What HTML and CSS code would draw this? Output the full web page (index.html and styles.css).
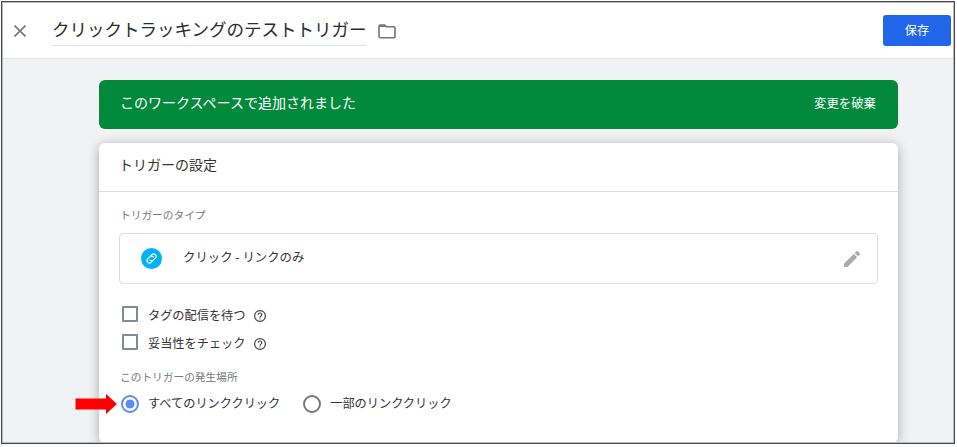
FILE: index.html
```
<!DOCTYPE html>
<html lang="ja">
<head>
  <meta charset="UTF-8">
  <meta name="viewport" content="width=device-width, initial-scale=1.0">
  <title>クリックトラッキングのテストトリガー</title>
  <link rel="stylesheet" href="styles.css">
</head>
<body>
  <div class="window">
    <!-- Header -->
    <header class="header">
      <svg class="icon-close" viewBox="0 0 12 12"><path d="M.5.5l11 11M11.500.5L.5 11.500"/></svg>
      <h1 class="title">クリックトラッキングのテストトリガー</h1>
      <svg class="icon-folder" viewBox="0 0 18 15"><path d="M1 2.2Q1 1 2.2 1H6.6L8.3 2.8H15.8Q17 2.8 17 4V12.6Q17 13.8 15.8 13.8H2.2Q1 13.8 1 12.6Z"/><path d="M1 2.2H7.5"/></svg>
      <button class="btn-save">保存</button>
    </header>

    <main class="content">
      <!-- Status banner -->
      <div class="banner">
        <span class="banner-text">このワークスペースで追加されました</span>
        <a class="banner-action">変更を破棄</a>
      </div>

      <!-- Trigger settings -->
      <section class="card">
        <h2 class="card-title">トリガーの設定</h2>
        <div class="card-body">
          <div class="label">トリガーのタイプ</div>
          <div class="type-box">
            <span class="type-icon">
              <svg viewBox="0 0 24 24"><g transform="rotate(-45 12 12)"><path d="M10 16.500H6.500a4.500 4.500 0 0 1 0-9H12a4.500 4.500 0 0 1 4.300 5.500"/><path d="M14 7.500H17.500a4.500 4.500 0 0 1 0 9H12a4.500 4.500 0 0 1-4.300-5.500"/></g></svg>
            </span>
            <span class="type-name">クリック - リンクのみ</span>
            <svg class="icon-edit" viewBox="3 3 18 18"><path d="M3 17.25V21h3.75L17.81 9.94l-3.75-3.75L3 17.25zM20.71 7.04a1 1 0 0 0 0-1.41l-2.34-2.34a1 1 0 0 0-1.41 0l-1.83 1.83 3.75 3.75 1.83-1.83z"/></svg>
          </div>

          <div class="check-row">
            <span class="checkbox"></span>
            <span class="option-text">タグの配信を待つ</span>
            <svg class="icon-help" viewBox="2 2 20 20"><path d="M11 18h2v-2h-2v2zm1-16a10 10 0 1 0 0 20 10 10 0 0 0 0-20zm0 18a8 8 0 1 1 0-16 8 8 0 0 1 0 16zm0-14a4 4 0 0 0-4 4h2a2 2 0 1 1 4 0c0 2-3 1.750-3 5h2c0-2.250 3-2.500 3-5a4 4 0 0 0-4-4z"/></svg>
          </div>
          <div class="check-row">
            <span class="checkbox"></span>
            <span class="option-text">妥当性をチェック</span>
            <svg class="icon-help" viewBox="2 2 20 20"><path d="M11 18h2v-2h-2v2zm1-16a10 10 0 1 0 0 20 10 10 0 0 0 0-20zm0 18a8 8 0 1 1 0-16 8 8 0 0 1 0 16zm0-14a4 4 0 0 0-4 4h2a2 2 0 1 1 4 0c0 2-3 1.750-3 5h2c0-2.250 3-2.500 3-5a4 4 0 0 0-4-4z"/></svg>
          </div>

          <div class="label label-fire">このトリガーの発生場所</div>
          <div class="radio-row">
            <svg class="arrow" viewBox="0 0 42 20"><path d="M.5 4.500H31V0L42 10 31 20V15.500H.5Z"/></svg>
            <span class="radio checked"></span>
            <span class="option-text radio-text">すべてのリンククリック</span>
            <span class="radio"></span>
            <span class="option-text">一部のリンククリック</span>
          </div>
        </div>
      </section>
    </main>
  </div>
</body>
</html>
```
FILE: styles.css
```
* {
  box-sizing: border-box;
}
body {
  margin: 0;
  padding: 1px 0 0 1px;
  height: 447px;
  overflow: hidden;
  background-color: #fcfcfc;
  color: #333;
  font-family: "Noto Sans CJK JP", sans-serif;
}
svg {
  display: block;
  flex: none;
}
.window {
  width: 954px;
  height: 443px;
  border: 1px solid #48494b;
  outline: 1px solid #b9babb;
  outline-offset: -2px;
  background-color: #f1f2f4;
  overflow: hidden;
}

/* Header */
.header {
  display: flex;
  align-items: center;
  height: 57px;
  padding: 0 3px 0 12px;
  background-color: #fff;
  border-bottom: 1px solid #e0e1e2;
}
.icon-close {
  width: 12px;
  height: 12px;
  margin: 1px 26px 0 0;
  fill: none;
  stroke: #757575;
  stroke-width: 1.6;
}
.title {
  width: 314px;
  height: 32px;
  margin: 0;
  border-bottom: 1px solid #e2e3e4;
  font-size: 17.5px;
  font-weight: 400;
  line-height: 29px;
  white-space: nowrap;
  color: #2b2b2b;
}
.icon-folder {
  width: 18px;
  height: 15px;
  margin: 3px 0 0 12px;
  fill: none;
  stroke: #757575;
  stroke-width: 1.6;
}
.btn-save {
  width: 68px;
  height: 31px;
  margin-left: auto;
  padding: 0;
  border: none;
  border-radius: 3px;
  background-color: #2166e8;
  color: #fff;
  font-family: inherit;
  font-size: 12.2px;
  font-weight: 400;
}

/* Banner */
.content {
  width: 799px;
  margin: 20.5px 0 0 97px;
}
.banner {
  display: flex;
  justify-content: space-between;
  align-items: center;
  height: 49.5px;
  padding: 0 22px 0 21px;
  border-radius: 6px;
  background-color: #03893c;
  color: #fff;
}
.banner-text {
  padding-bottom: 5px;
  font-size: 14px;
}
.banner-action {
  padding-bottom: 2px;
  font-size: 12.4px;
  font-weight: 400;
}

/* Settings card */
.card {
  height: 300px;
  margin-top: 14px;
  border-radius: 6px;
  background-color: #fff;
  box-shadow: 0 2px 12px rgba(0, 0, 0, 0.3);
}
.card-title {
  height: 49px;
  margin: 0;
  padding-left: 20px;
  border-bottom: 1px solid #dcddde;
  font-size: 14px;
  font-weight: 400;
  line-height: 43px;
}
.card-body {
  padding: 15px 20px 0;
}
.label {
  height: 16px;
  padding-left: 1px;
  font-size: 10.7px;
  line-height: 16px;
  color: #777;
}
.type-box {
  display: flex;
  align-items: center;
  height: 51px;
  margin: 10px 0 17px;
  padding: 0 17px 0 21px;
  border: 1px solid #dcddde;
  border-radius: 4px;
}
.type-icon {
  width: 21px;
  height: 21px;
  margin-right: 21px;
  padding: 4px;
  border-radius: 50%;
  background-color: #03b1f8;
}
.type-icon svg {
  width: 13px;
  height: 13px;
  fill: none;
  stroke: #fff;
  stroke-width: 2;
}
.type-name {
  padding-bottom: 3px;
  font-size: 12.4px;
}
.icon-edit {
  width: 16px;
  height: 16px;
  margin-left: auto;
  fill: #aaa;
}
.check-row {
  display: flex;
  align-items: center;
  height: 28px;
  padding-left: 3px;
}
.checkbox {
  width: 16px;
  height: 16px;
  margin: -2px 10px 0 0;
  border: 2px solid #858c91;
  border-radius: 1px;
}
.option-text {
  font-size: 12.2px;
  line-height: 20px;
  white-space: nowrap;
}
.icon-help {
  width: 12px;
  height: 12px;
  margin: 2px 0 0 8px;
  fill: #444;
}

/* Firing options */
.label-fire {
  margin-top: 12px;
}
.radio-row {
  position: relative;
  display: flex;
  align-items: center;
  height: 18px;
  margin-top: 10px;
  padding-left: 2px;
}
.radio-row .option-text {
  padding-bottom: 2px;
}
.radio {
  width: 18px;
  height: 18px;
  margin-right: 9px;
  border: 2px solid #777;
  border-radius: 50%;
}
.radio.checked {
  border-color: #588cf8;
  background: radial-gradient(circle, #588cf8 4.200px, transparent 4.800px);
}
.radio-text {
  margin-right: 23px;
}
/* Pointer over the card edge */
.arrow {
  position: absolute;
  left: -44px;
  top: -1px;
  width: 42px;
  height: 20px;
  fill: #f00;
}
```
